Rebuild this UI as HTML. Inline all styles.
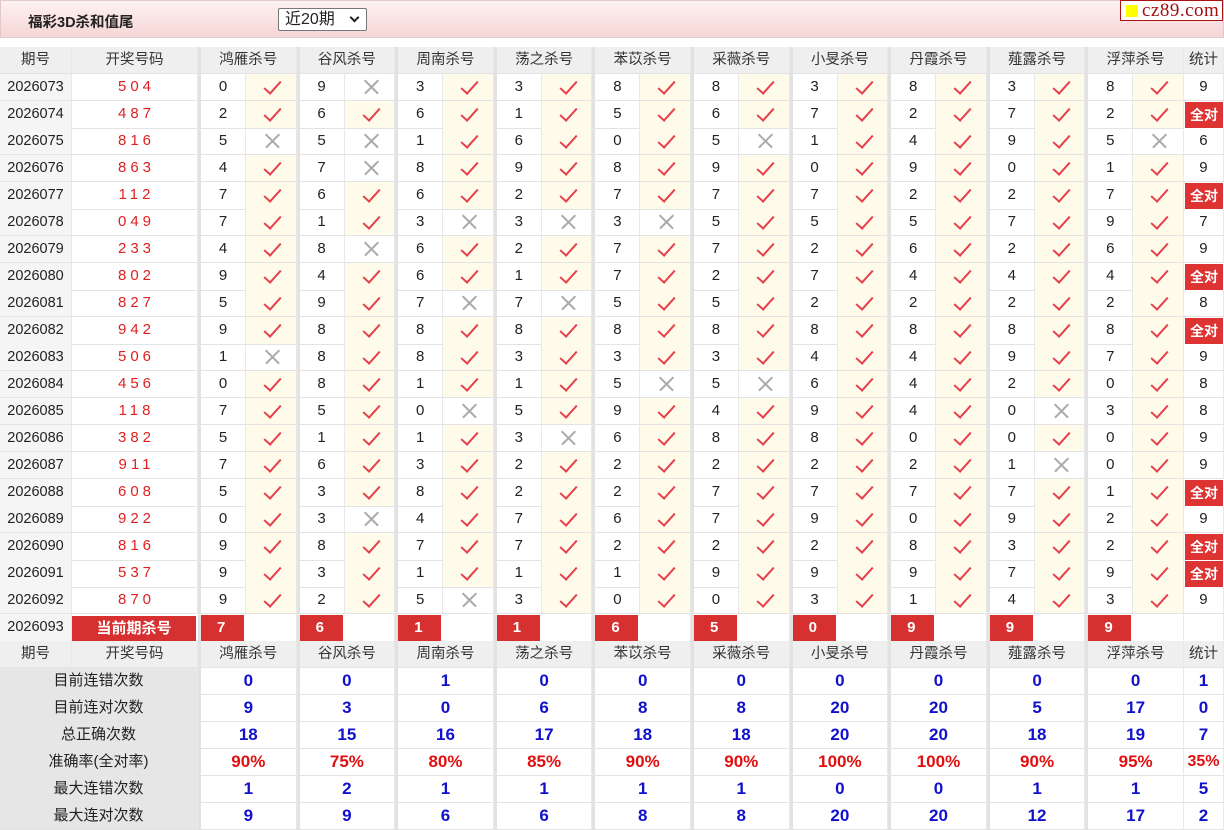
<!DOCTYPE html><html><head><meta charset="utf-8"><style>
*{margin:0;padding:0;box-sizing:border-box}
body{width:1224px;height:828px;background:#fff;font-family:"Liberation Sans","Noto Sans CJK SC",sans-serif;position:relative;overflow:hidden;color:#222}
.top{position:absolute;left:0;top:0;width:1224px;height:38px;background:linear-gradient(#fdf1f1,#f6d6d6);border:1px solid #e3c9c9}
.ttl{position:absolute;left:27px;top:10px;font-size:14.5px;font-weight:bold;color:#222}
.sel{position:absolute;left:277px;top:7px;width:89px;height:23px;border:1px solid #777;background:#fff;font-size:16px;line-height:21px;padding-left:6px;border-radius:2px}
.sel i{position:absolute;right:8px;top:5px;width:7px;height:7px;border-right:2px solid #222;border-bottom:2px solid #222;transform:rotate(45deg)}
.logo{position:absolute;left:1120px;top:0;width:103px;height:21px;border:1px solid #a11;background:#fff;font-family:"Liberation Serif",serif;font-size:19px;line-height:19px;color:#a01010;padding-left:21px;letter-spacing:0.5px}
.logo b{position:absolute;left:5px;top:4px;width:12px;height:12px;background:#ff0}
.tb{position:absolute;left:0;top:47px;width:1224px}
.r{display:grid;grid-template-columns:72px 126px repeat(10,48px 50.6px) 1fr;height:27px}
.r>div{border-bottom:1px solid #e3e3e3;border-right:1px solid #e9e9e9;text-align:center;font-size:15px;line-height:26px;position:relative}
.r>.d{background:#f5f5f5;font-size:14.5px}
.r>.h{background:#efefef;font-size:14.5px;color:#333}
.h2{grid-column:span 2}
.r>.g{border-left:3px solid #e2e2e2}
.r>.w{color:#e02020;letter-spacing:4px;padding-left:4px}
.r>.c{background:#fffbea}
.c::after{content:"";position:absolute;left:22px;top:3px;width:7px;height:15px;border-right:2.5px solid #e5404b;border-bottom:2.5px solid #e5404b;transform:rotate(42deg)}
.x::before,.x::after{content:"";position:absolute;left:17px;top:12px;width:19px;height:1.5px;background:#aaa;transform:rotate(45deg)}
.x::after{transform:rotate(-45deg)}
.r>.q{background:#d33;color:#fff;font-weight:bold;font-size:14px;border:1px solid #fff}
.r>.p{background:#d63031;color:#fff;font-weight:bold;font-size:15px;text-align:left;padding-left:16px;border-top:1px solid #fff;border-bottom:2px solid #fff;border-right:2px solid #fff}
.r>.pp{background:#d63031;color:#fff;font-weight:bold;font-size:15px;border:2px solid #fff;border-left:none}
.l{grid-column:span 2;background:#e6e6e6!important;font-size:14.5px}
.r>.v{grid-column:span 2;color:#1111cc;font-weight:bold;font-size:17px;border-left:3px solid #e2e2e2}
.r>.vr{color:#e01010}
.r>.sv{color:#1111cc;font-weight:bold;font-size:17px}
.r>.svr{color:#e01010;font-weight:bold;font-size:16px}
</style></head><body>
<div class="top"><div class="ttl">福彩3D杀和值尾</div><div class="sel">近20期<i></i></div></div>
<div class="logo"><b></b>cz89.com</div>
<div class="tb">
<div class="r"><div class="h">期号</div><div class="h">开奖号码</div><div class="h h2 g">鸿雁杀号</div><div class="h h2 g">谷风杀号</div><div class="h h2 g">周南杀号</div><div class="h h2 g">荡之杀号</div><div class="h h2 g">苯苡杀号</div><div class="h h2 g">采薇杀号</div><div class="h h2 g">小旻杀号</div><div class="h h2 g">丹霞杀号</div><div class="h h2 g">薤露杀号</div><div class="h h2 g">浮萍杀号</div><div class="h">统计</div></div>
<div class="r"><div class="d">2026073</div><div class="w">504</div><div class="g">0</div><div class="c"></div><div class="g">9</div><div class="x"></div><div class="g">3</div><div class="c"></div><div class="g">3</div><div class="c"></div><div class="g">8</div><div class="c"></div><div class="g">8</div><div class="c"></div><div class="g">3</div><div class="c"></div><div class="g">8</div><div class="c"></div><div class="g">3</div><div class="c"></div><div class="g">8</div><div class="c"></div><div>9</div></div>
<div class="r"><div class="d">2026074</div><div class="w">487</div><div class="g">2</div><div class="c"></div><div class="g">6</div><div class="c"></div><div class="g">6</div><div class="c"></div><div class="g">1</div><div class="c"></div><div class="g">5</div><div class="c"></div><div class="g">6</div><div class="c"></div><div class="g">7</div><div class="c"></div><div class="g">2</div><div class="c"></div><div class="g">7</div><div class="c"></div><div class="g">2</div><div class="c"></div><div class="q">全对</div></div>
<div class="r"><div class="d">2026075</div><div class="w">816</div><div class="g">5</div><div class="x"></div><div class="g">5</div><div class="x"></div><div class="g">1</div><div class="c"></div><div class="g">6</div><div class="c"></div><div class="g">0</div><div class="c"></div><div class="g">5</div><div class="x"></div><div class="g">1</div><div class="c"></div><div class="g">4</div><div class="c"></div><div class="g">9</div><div class="c"></div><div class="g">5</div><div class="x"></div><div>6</div></div>
<div class="r"><div class="d">2026076</div><div class="w">863</div><div class="g">4</div><div class="c"></div><div class="g">7</div><div class="x"></div><div class="g">8</div><div class="c"></div><div class="g">9</div><div class="c"></div><div class="g">8</div><div class="c"></div><div class="g">9</div><div class="c"></div><div class="g">0</div><div class="c"></div><div class="g">9</div><div class="c"></div><div class="g">0</div><div class="c"></div><div class="g">1</div><div class="c"></div><div>9</div></div>
<div class="r"><div class="d">2026077</div><div class="w">112</div><div class="g">7</div><div class="c"></div><div class="g">6</div><div class="c"></div><div class="g">6</div><div class="c"></div><div class="g">2</div><div class="c"></div><div class="g">7</div><div class="c"></div><div class="g">7</div><div class="c"></div><div class="g">7</div><div class="c"></div><div class="g">2</div><div class="c"></div><div class="g">2</div><div class="c"></div><div class="g">7</div><div class="c"></div><div class="q">全对</div></div>
<div class="r"><div class="d">2026078</div><div class="w">049</div><div class="g">7</div><div class="c"></div><div class="g">1</div><div class="c"></div><div class="g">3</div><div class="x"></div><div class="g">3</div><div class="x"></div><div class="g">3</div><div class="x"></div><div class="g">5</div><div class="c"></div><div class="g">5</div><div class="c"></div><div class="g">5</div><div class="c"></div><div class="g">7</div><div class="c"></div><div class="g">9</div><div class="c"></div><div>7</div></div>
<div class="r"><div class="d">2026079</div><div class="w">233</div><div class="g">4</div><div class="c"></div><div class="g">8</div><div class="x"></div><div class="g">6</div><div class="c"></div><div class="g">2</div><div class="c"></div><div class="g">7</div><div class="c"></div><div class="g">7</div><div class="c"></div><div class="g">2</div><div class="c"></div><div class="g">6</div><div class="c"></div><div class="g">2</div><div class="c"></div><div class="g">6</div><div class="c"></div><div>9</div></div>
<div class="r"><div class="d">2026080</div><div class="w">802</div><div class="g">9</div><div class="c"></div><div class="g">4</div><div class="c"></div><div class="g">6</div><div class="c"></div><div class="g">1</div><div class="c"></div><div class="g">7</div><div class="c"></div><div class="g">2</div><div class="c"></div><div class="g">7</div><div class="c"></div><div class="g">4</div><div class="c"></div><div class="g">4</div><div class="c"></div><div class="g">4</div><div class="c"></div><div class="q">全对</div></div>
<div class="r"><div class="d">2026081</div><div class="w">827</div><div class="g">5</div><div class="c"></div><div class="g">9</div><div class="c"></div><div class="g">7</div><div class="x"></div><div class="g">7</div><div class="x"></div><div class="g">5</div><div class="c"></div><div class="g">5</div><div class="c"></div><div class="g">2</div><div class="c"></div><div class="g">2</div><div class="c"></div><div class="g">2</div><div class="c"></div><div class="g">2</div><div class="c"></div><div>8</div></div>
<div class="r"><div class="d">2026082</div><div class="w">942</div><div class="g">9</div><div class="c"></div><div class="g">8</div><div class="c"></div><div class="g">8</div><div class="c"></div><div class="g">8</div><div class="c"></div><div class="g">8</div><div class="c"></div><div class="g">8</div><div class="c"></div><div class="g">8</div><div class="c"></div><div class="g">8</div><div class="c"></div><div class="g">8</div><div class="c"></div><div class="g">8</div><div class="c"></div><div class="q">全对</div></div>
<div class="r"><div class="d">2026083</div><div class="w">506</div><div class="g">1</div><div class="x"></div><div class="g">8</div><div class="c"></div><div class="g">8</div><div class="c"></div><div class="g">3</div><div class="c"></div><div class="g">3</div><div class="c"></div><div class="g">3</div><div class="c"></div><div class="g">4</div><div class="c"></div><div class="g">4</div><div class="c"></div><div class="g">9</div><div class="c"></div><div class="g">7</div><div class="c"></div><div>9</div></div>
<div class="r"><div class="d">2026084</div><div class="w">456</div><div class="g">0</div><div class="c"></div><div class="g">8</div><div class="c"></div><div class="g">1</div><div class="c"></div><div class="g">1</div><div class="c"></div><div class="g">5</div><div class="x"></div><div class="g">5</div><div class="x"></div><div class="g">6</div><div class="c"></div><div class="g">4</div><div class="c"></div><div class="g">2</div><div class="c"></div><div class="g">0</div><div class="c"></div><div>8</div></div>
<div class="r"><div class="d">2026085</div><div class="w">118</div><div class="g">7</div><div class="c"></div><div class="g">5</div><div class="c"></div><div class="g">0</div><div class="x"></div><div class="g">5</div><div class="c"></div><div class="g">9</div><div class="c"></div><div class="g">4</div><div class="c"></div><div class="g">9</div><div class="c"></div><div class="g">4</div><div class="c"></div><div class="g">0</div><div class="x"></div><div class="g">3</div><div class="c"></div><div>8</div></div>
<div class="r"><div class="d">2026086</div><div class="w">382</div><div class="g">5</div><div class="c"></div><div class="g">1</div><div class="c"></div><div class="g">1</div><div class="c"></div><div class="g">3</div><div class="x"></div><div class="g">6</div><div class="c"></div><div class="g">8</div><div class="c"></div><div class="g">8</div><div class="c"></div><div class="g">0</div><div class="c"></div><div class="g">0</div><div class="c"></div><div class="g">0</div><div class="c"></div><div>9</div></div>
<div class="r"><div class="d">2026087</div><div class="w">911</div><div class="g">7</div><div class="c"></div><div class="g">6</div><div class="c"></div><div class="g">3</div><div class="c"></div><div class="g">2</div><div class="c"></div><div class="g">2</div><div class="c"></div><div class="g">2</div><div class="c"></div><div class="g">2</div><div class="c"></div><div class="g">2</div><div class="c"></div><div class="g">1</div><div class="x"></div><div class="g">0</div><div class="c"></div><div>9</div></div>
<div class="r"><div class="d">2026088</div><div class="w">608</div><div class="g">5</div><div class="c"></div><div class="g">3</div><div class="c"></div><div class="g">8</div><div class="c"></div><div class="g">2</div><div class="c"></div><div class="g">2</div><div class="c"></div><div class="g">7</div><div class="c"></div><div class="g">7</div><div class="c"></div><div class="g">7</div><div class="c"></div><div class="g">7</div><div class="c"></div><div class="g">1</div><div class="c"></div><div class="q">全对</div></div>
<div class="r"><div class="d">2026089</div><div class="w">922</div><div class="g">0</div><div class="c"></div><div class="g">3</div><div class="x"></div><div class="g">4</div><div class="c"></div><div class="g">7</div><div class="c"></div><div class="g">6</div><div class="c"></div><div class="g">7</div><div class="c"></div><div class="g">9</div><div class="c"></div><div class="g">0</div><div class="c"></div><div class="g">9</div><div class="c"></div><div class="g">2</div><div class="c"></div><div>9</div></div>
<div class="r"><div class="d">2026090</div><div class="w">816</div><div class="g">9</div><div class="c"></div><div class="g">8</div><div class="c"></div><div class="g">7</div><div class="c"></div><div class="g">7</div><div class="c"></div><div class="g">2</div><div class="c"></div><div class="g">2</div><div class="c"></div><div class="g">2</div><div class="c"></div><div class="g">8</div><div class="c"></div><div class="g">3</div><div class="c"></div><div class="g">2</div><div class="c"></div><div class="q">全对</div></div>
<div class="r"><div class="d">2026091</div><div class="w">537</div><div class="g">9</div><div class="c"></div><div class="g">3</div><div class="c"></div><div class="g">1</div><div class="c"></div><div class="g">1</div><div class="c"></div><div class="g">1</div><div class="c"></div><div class="g">9</div><div class="c"></div><div class="g">9</div><div class="c"></div><div class="g">9</div><div class="c"></div><div class="g">7</div><div class="c"></div><div class="g">9</div><div class="c"></div><div class="q">全对</div></div>
<div class="r"><div class="d">2026092</div><div class="w">870</div><div class="g">9</div><div class="c"></div><div class="g">2</div><div class="c"></div><div class="g">5</div><div class="x"></div><div class="g">3</div><div class="c"></div><div class="g">0</div><div class="c"></div><div class="g">0</div><div class="c"></div><div class="g">3</div><div class="c"></div><div class="g">1</div><div class="c"></div><div class="g">4</div><div class="c"></div><div class="g">3</div><div class="c"></div><div>9</div></div>
<div class="r"><div class="d">2026093</div><div class="pp">当前期杀号</div><div class="g p">7</div><div></div><div class="g p">6</div><div></div><div class="g p">1</div><div></div><div class="g p">1</div><div></div><div class="g p">6</div><div></div><div class="g p">5</div><div></div><div class="g p">0</div><div></div><div class="g p">9</div><div></div><div class="g p">9</div><div></div><div class="g p">9</div><div></div><div></div></div>
<div class="r"><div class="h">期号</div><div class="h">开奖号码</div><div class="h h2 g">鸿雁杀号</div><div class="h h2 g">谷风杀号</div><div class="h h2 g">周南杀号</div><div class="h h2 g">荡之杀号</div><div class="h h2 g">苯苡杀号</div><div class="h h2 g">采薇杀号</div><div class="h h2 g">小旻杀号</div><div class="h h2 g">丹霞杀号</div><div class="h h2 g">薤露杀号</div><div class="h h2 g">浮萍杀号</div><div class="h">统计</div></div>
<div class="r"><div class="l">目前连错次数</div><div class="v">0</div><div class="v">0</div><div class="v">1</div><div class="v">0</div><div class="v">0</div><div class="v">0</div><div class="v">0</div><div class="v">0</div><div class="v">0</div><div class="v">0</div><div class="sv">1</div></div>
<div class="r"><div class="l">目前连对次数</div><div class="v">9</div><div class="v">3</div><div class="v">0</div><div class="v">6</div><div class="v">8</div><div class="v">8</div><div class="v">20</div><div class="v">20</div><div class="v">5</div><div class="v">17</div><div class="sv">0</div></div>
<div class="r"><div class="l">总正确次数</div><div class="v">18</div><div class="v">15</div><div class="v">16</div><div class="v">17</div><div class="v">18</div><div class="v">18</div><div class="v">20</div><div class="v">20</div><div class="v">18</div><div class="v">19</div><div class="sv">7</div></div>
<div class="r"><div class="l">准确率(全对率)</div><div class="v vr">90%</div><div class="v vr">75%</div><div class="v vr">80%</div><div class="v vr">85%</div><div class="v vr">90%</div><div class="v vr">90%</div><div class="v vr">100%</div><div class="v vr">100%</div><div class="v vr">90%</div><div class="v vr">95%</div><div class="svr">35%</div></div>
<div class="r"><div class="l">最大连错次数</div><div class="v">1</div><div class="v">2</div><div class="v">1</div><div class="v">1</div><div class="v">1</div><div class="v">1</div><div class="v">0</div><div class="v">0</div><div class="v">1</div><div class="v">1</div><div class="sv">5</div></div>
<div class="r"><div class="l">最大连对次数</div><div class="v">9</div><div class="v">9</div><div class="v">6</div><div class="v">6</div><div class="v">8</div><div class="v">8</div><div class="v">20</div><div class="v">20</div><div class="v">12</div><div class="v">17</div><div class="sv">2</div></div>
</div>
</body></html>
